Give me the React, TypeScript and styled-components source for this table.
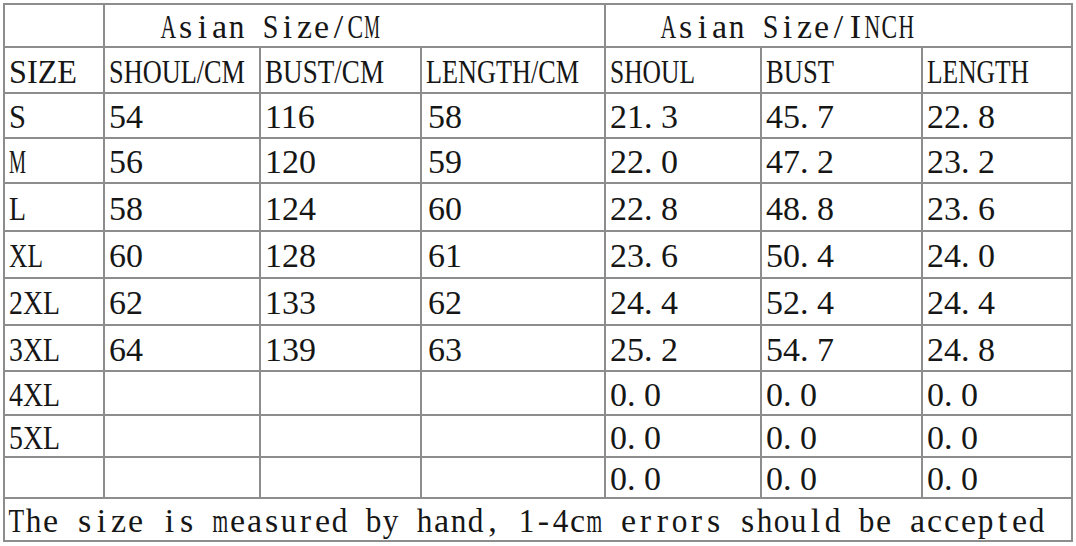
import React from "react";
import styled, { createGlobalStyle } from "styled-components";

const GlobalStyle = createGlobalStyle`
  html, body {
    margin: 0;
    padding: 0;
    background: #fff;
  }
`;

const Page = styled.div`
  padding: 3px 0 0 3px;
  width: 1076px;
  height: 546px;
  box-sizing: border-box;
  background: #fff;
`;

const Chart = styled.table`
  border-collapse: collapse;
  table-layout: fixed;
  width: 1068px;
  color: #161616;
`;

const Row = styled.tr<{ $h: number }>`
  height: ${(p) => p.$h}px;
`;

const Cell = styled.td<{ $indent?: number }>`
  border: 2px solid #8d8d8d;
  padding: 3px 0 0 ${(p) => p.$indent ?? 4}px;
  font-family: "Liberation Serif", "Times New Roman", serif;
  font-size: 34px;
  line-height: 1;
  white-space: nowrap;
  overflow: hidden;
  vertical-align: middle;
  box-sizing: border-box;
`;

// SimSun style: every latin glyph sits in a half-em cell, so caps look narrow
const Label = styled.span<{ $squeeze: number }>`
  display: inline-block;
  transform: scaleX(${(p) => p.$squeeze});
  transform-origin: left center;
`;

// one half-em slot per character, for the monospaced captions
const Slot = styled.span`
  display: inline-flex;
  justify-content: center;
  width: 0.5em;
  vertical-align: baseline;
`;

const Glyph = styled.span<{ $k: number }>`
  display: inline-block;
  flex-shrink: 0;
  transform: scaleX(${(p) => p.$k});
`;

const Dot = styled.span`
  display: inline-block;
  width: 0.5em;
`;

const widths: Record<string, number> = {
  A: 0.722, B: 0.667, C: 0.667, D: 0.722, E: 0.611, G: 0.722, H: 0.722,
  I: 0.333, L: 0.611, M: 0.889, N: 0.722, O: 0.722, S: 0.556, T: 0.611,
  U: 0.722, X: 0.722, Z: 0.611, "/": 0.278,
  a: 0.444, b: 0.5, c: 0.444, d: 0.5, e: 0.444, f: 0.333, g: 0.5, h: 0.5,
  i: 0.278, k: 0.5, l: 0.278, m: 0.778, n: 0.5, o: 0.5, p: 0.5, r: 0.333,
  s: 0.389, t: 0.278, u: 0.5, w: 0.722, y: 0.5, z: 0.444,
  ",": 0.25, "-": 0.333, " ": 0.25,
};

const w = (ch: string) => widths[ch] ?? 0.5;

const fit = (text: string) => {
  const natural = text.split("").reduce((sum, ch) => sum + w(ch), 0);
  return Math.min(1, (text.length * 0.5) / natural);
};

const Caps = ({ text }: { text: string }) => (
  <Label $squeeze={fit(text)}>{text}</Label>
);

const Monospaced = ({ text }: { text: string }) => (
  <span>
    {text.split("").map((ch, i) => (
      <Slot key={i}>
        {ch === " " ? "\u00a0" : <Glyph $k={Math.min(1, 0.46 / w(ch))}>{ch}</Glyph>}
      </Slot>
    ))}
  </span>
);

const Inch = ({ value }: { value: string }) => {
  const [a, b] = value.split(".");
  return (
    <span>
      {a}
      <Dot>.</Dot>
      {b}
    </span>
  );
};

const colWidths = [100, 156, 161, 184, 156, 161, 150];

const rows = [
  { size: "S", cm: ["54", "116", "58"], inch: ["21.3", "45.7", "22.8"], h: 45 },
  { size: "M", cm: ["56", "120", "59"], inch: ["22.0", "47.2", "23.2"], h: 45 },
  { size: "L", cm: ["58", "124", "60"], inch: ["22.8", "48.8", "23.6"], h: 48 },
  { size: "XL", cm: ["60", "128", "61"], inch: ["23.6", "50.4", "24.0"], h: 47 },
  { size: "2XL", cm: ["62", "133", "62"], inch: ["24.4", "52.4", "24.4"], h: 47 },
  { size: "3XL", cm: ["64", "139", "63"], inch: ["25.2", "54.7", "24.8"], h: 46 },
  { size: "4XL", cm: ["", "", ""], inch: ["0.0", "0.0", "0.0"], h: 44 },
  { size: "5XL", cm: ["", "", ""], inch: ["0.0", "0.0", "0.0"], h: 42 },
  { size: "", cm: ["", "", ""], inch: ["0.0", "0.0", "0.0"], h: 41 },
];

const heads = ["SIZE", "SHOUL/CM", "BUST/CM", "LENGTH/CM", "SHOUL", "BUST", "LENGTH"];

export default function App() {
  return (
    <Page>
      <GlobalStyle />
      <Chart>
        <colgroup>
          {colWidths.map((cw, i) => (
            <col key={i} style={{ width: cw }} />
          ))}
        </colgroup>
        <tbody>
          <Row $h={43}>
            <Cell />
            <Cell colSpan={3} $indent={55}>
              <Monospaced text="Asian Size/CM" />
            </Cell>
            <Cell colSpan={3} $indent={54}>
              <Monospaced text="Asian Size/INCH" />
            </Cell>
          </Row>
          <Row $h={46}>
            {heads.map((h, i) => (
              <Cell key={i}>
                <Caps text={h} />
              </Cell>
            ))}
          </Row>
          {rows.map((r, i) => (
            <Row key={i} $h={r.h}>
              <Cell>{r.size && <Caps text={r.size} />}</Cell>
              {r.cm.map((v, j) => (
                <Cell key={"c" + j} $indent={j === 2 ? 6 : 4}>
                  {v}
                </Cell>
              ))}
              {r.inch.map((v, j) => (
                <Cell key={"i" + j}>
                  <Inch value={v} />
                </Cell>
              ))}
            </Row>
          ))}
          <Row $h={43}>
            <Cell colSpan={7} $indent={3}>
              <Monospaced text="The size is measured by hand, 1-4cm errors should be accepted" />
            </Cell>
          </Row>
        </tbody>
      </Chart>
    </Page>
  );
}
